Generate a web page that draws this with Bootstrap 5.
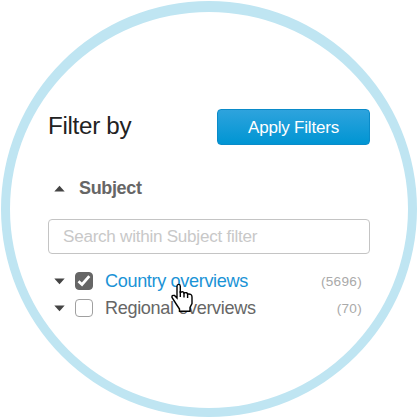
<!DOCTYPE html>
<html lang="en">
<head>
<meta charset="utf-8">
<meta name="viewport" content="width=device-width, initial-scale=1">
<title>Filter by subject</title>
<link href="https://cdn.jsdelivr.net/npm/bootstrap@5.3.0/dist/css/bootstrap.min.css" rel="stylesheet">
<style>
body { font-family: "Liberation Sans", Arial, sans-serif; background: #fff; color: #666; overflow: hidden; }
.lens { width: 416px; height: 416px; margin: 1px; border: 9px solid #bfe5f2; border-top-width: 11px; padding: 97px 38px 0 38px; }
.panel-title { font-size: 24.2px; letter-spacing: -.3px; line-height: 33px; color: #222; }
.btn-apply { width: 153px; height: 36px; padding: 0; font-size: 17px; letter-spacing: -.2px; line-height: 33px; color: #fff; border: 1px solid #0a8bc9; border-radius: 4px; background: linear-gradient(#2ea3dd, #0095d3); }
.btn-apply:hover { color: #fff; }
.facet-title { font-size: 18px; letter-spacing: -.35px; line-height: 24px; margin-top: 31px; padding-left: 6px; gap: 14px; }
.facet-search { height: 35px; margin-top: 19px; padding: 0 14px; font-size: 17.1px; letter-spacing: -.26px; border: 1px solid #c4c4c4; border-radius: 4px; }
.facet-search::placeholder { color: #c8c8c8; opacity: 1; }
.facet-list { margin-top: 14px; padding-left: 6px; padding-right: 8px; }
.facet-row { height: 27px; font-size: 18.1px; letter-spacing: -.35px; line-height: 27px; }
.facet-row .form-check-input { width: 18px; height: 18px; margin: -1px 12px 0 10px; border: 1.4px solid #a0a0a0; border-radius: 4px; }
.facet-row .form-check-input:checked { background-color: #666; border-color: #666; background-size: 100%;
  background-image: url("data:image/svg+xml,%3csvg xmlns='http://www.w3.org/2000/svg' viewBox='0 0 16 16'%3e%3cpath d='M2.5 8.3 6 11.5 13.3 3.2' fill='none' stroke='%23fff' stroke-width='2.8'/%3e%3c/svg%3e"); }
.facet-link { color: #1a93d6; }
.facet-count { font-size: 13.6px; color: #aaa; letter-spacing: .3px; }
.pointer-hand { left: 170px; top: 283px; }
</style>
</head>
<body>
<main class="lens rounded-circle">
  <div class="d-flex justify-content-between align-items-start">
    <h1 class="panel-title mb-0 fw-normal">Filter by</h1>
    <button type="button" class="btn btn-apply">Apply Filters</button>
  </div>
  <h2 class="facet-title d-flex align-items-center mb-0 fw-bold">
    <svg width="11" height="7" viewBox="0 0 11 7"><path d="M.3 6.5 5.5.8l5.2 5.7z" fill="#444"/></svg>
    <span>Subject</span>
  </h2>
  <input type="text" class="form-control facet-search" placeholder="Search within Subject filter" aria-label="Search within Subject filter">
  <ul class="facet-list list-unstyled mb-0">
    <li class="facet-row d-flex align-items-center">
      <svg width="11" height="7" viewBox="0 0 11 7"><path d="M.3.5h10.4L5.5 6.2z" fill="#444"/></svg>
      <input class="form-check-input flex-shrink-0" type="checkbox" id="country" checked>
      <label class="facet-link" for="country">Country overviews</label>
      <span class="facet-count ms-auto">(5696)</span>
    </li>
    <li class="facet-row d-flex align-items-center">
      <svg width="11" height="7" viewBox="0 0 11 7"><path d="M.3.5h10.4L5.5 6.2z" fill="#444"/></svg>
      <input class="form-check-input flex-shrink-0" type="checkbox" id="regional">
      <label for="regional">Regional overviews</label>
      <span class="facet-count ms-auto">(70)</span>
    </li>
  </ul>
</main>
<svg class="pointer-hand position-absolute" width="24" height="30" viewBox="0 0 24 30">
  <path d="M7 14V3.2Q7 1.4 8.6 1.4T10.3 3.2V9.3Q13.6 8 14 10Q17 9 17.6 11Q22 10.500 22 14V20.500L20 24.500V28.300H9.500V26L6.500 21.500L2 14.500Q1.500 11.800 4.500 12.500L7 15Z" fill="#fff" stroke="#000" stroke-width="1.400"/>
  <path d="M10.300 8V14M14 10V14.500M17.600 11V15" fill="none" stroke="#000" stroke-width="1.400"/>
</svg>
<script src="https://cdn.jsdelivr.net/npm/bootstrap@5.3.0/dist/js/bootstrap.bundle.min.js"></script>
</body>
</html>
